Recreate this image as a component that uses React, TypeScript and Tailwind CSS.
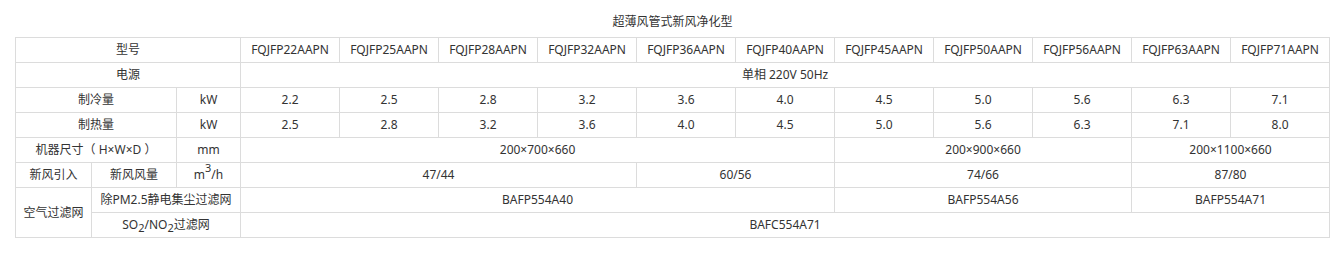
const models = [
  'FQJFP22AAPN',
  'FQJFP25AAPN',
  'FQJFP28AAPN',
  'FQJFP32AAPN',
  'FQJFP36AAPN',
  'FQJFP40AAPN',
  'FQJFP45AAPN',
  'FQJFP50AAPN',
  'FQJFP56AAPN',
  'FQJFP63AAPN',
  'FQJFP71AAPN',
];

const cooling = ['2.2', '2.5', '2.8', '3.2', '3.6', '4.0', '4.5', '5.0', '5.6', '6.3', '7.1'];
const heating = ['2.5', '2.8', '3.2', '3.6', '4.0', '4.5', '5.0', '5.6', '6.3', '7.1', '8.0'];

const cell = 'border border-[#dcdcdc] h-[25px] p-0 text-center align-middle whitespace-nowrap';

export default function App() {
  return (
    <div
      className="bg-white text-[#333] text-[12px] pl-[15px] pt-[13px]"
      style={{ fontFamily: '"Noto Sans", "Noto Sans CJK SC", sans-serif' }}
    >
      <div className="w-[1315px] text-center leading-[18px] mb-[6px]">超薄风管式新风净化型</div>
      <table className="w-[1315px] table-fixed border-collapse leading-[16px]">
        <colgroup>
          <col className="w-[76px]" />
          <col className="w-[85px]" />
          <col className="w-[64px]" />
          {models.map((m) => (
            <col key={m} className="w-[99px]" />
          ))}
        </colgroup>
        <tbody>
          <tr>
            <td className={cell} colSpan={3}>型号</td>
            {models.map((m) => (
              <td key={m} className={cell}>{m}</td>
            ))}
          </tr>
          <tr>
            <td className={cell} colSpan={3}>电源</td>
            <td className={cell} colSpan={11}>单相 220V 50Hz</td>
          </tr>
          <tr>
            <td className={cell} colSpan={2}>制冷量</td>
            <td className={cell}>kW</td>
            {cooling.map((v, i) => (
              <td key={i} className={cell}>{v}</td>
            ))}
          </tr>
          <tr>
            <td className={cell} colSpan={2}>制热量</td>
            <td className={cell}>kW</td>
            {heating.map((v, i) => (
              <td key={i} className={cell}>{v}</td>
            ))}
          </tr>
          <tr>
            <td className={cell} colSpan={2}>机器尺寸（ H×W×D ）</td>
            <td className={cell}>mm</td>
            <td className={cell} colSpan={6}>200×700×660</td>
            <td className={cell} colSpan={3}>200×900×660</td>
            <td className={cell} colSpan={2}>200×1100×660</td>
          </tr>
          <tr>
            <td className={cell}>新风引入</td>
            <td className={cell}>新风风量</td>
            <td className={cell}>
              m<sup className="text-[11px] -top-[0.6em]">3</sup>/h
            </td>
            <td className={cell} colSpan={4}>47/44</td>
            <td className={cell} colSpan={2}>60/56</td>
            <td className={cell} colSpan={3}>74/66</td>
            <td className={cell} colSpan={2}>87/80</td>
          </tr>
          <tr>
            <td className={cell} rowSpan={2}>空气过滤网</td>
            <td className={cell} colSpan={2}>除PM2.5静电集尘过滤网</td>
            <td className={cell} colSpan={6}>BAFP554A40</td>
            <td className={cell} colSpan={3}>BAFP554A56</td>
            <td className={cell} colSpan={2}>BAFP554A71</td>
          </tr>
          <tr>
            <td className={cell} colSpan={2}>
              SO<sub className="text-[11px]">2</sub>/NO<sub className="text-[11px]">2</sub>过滤网
            </td>
            <td className={cell} colSpan={11}>BAFC554A71</td>
          </tr>
        </tbody>
      </table>
    </div>
  );
}
